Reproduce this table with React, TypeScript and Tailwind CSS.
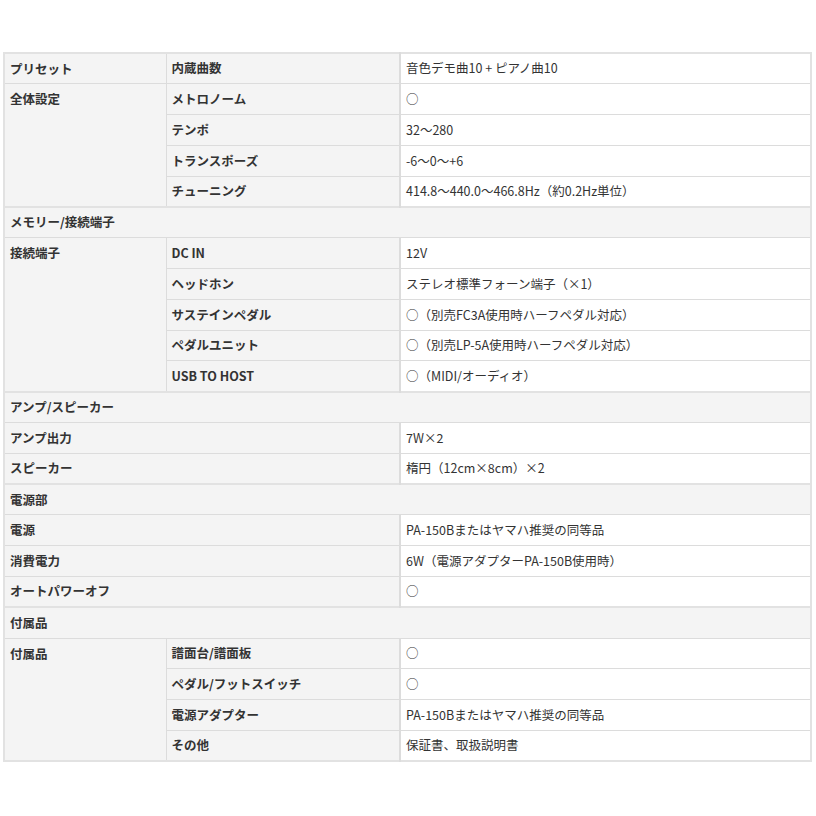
import React from 'react'

type Spec = { label: string; value: string }
type Group = { name: string; items: Spec[]; sub?: boolean }
type Section = { title?: string; groups: Group[] }

const sections: Section[] = [
  {
    groups: [
      { name: 'プリセット', sub: true, items: [{ label: '内蔵曲数', value: '音色デモ曲10 + ピアノ曲10' }] },
      {
        name: '全体設定',
        sub: true,
        items: [
          { label: 'メトロノーム', value: '○' },
          { label: 'テンポ', value: '32〜280' },
          { label: 'トランスポーズ', value: '-6〜0〜+6' },
          { label: 'チューニング', value: '414.8〜440.0〜466.8Hz（約0.2Hz単位）' },
        ],
      },
    ],
  },
  {
    title: 'メモリー/接続端子',
    groups: [
      {
        name: '接続端子',
        sub: true,
        items: [
          { label: 'DC IN', value: '12V' },
          { label: 'ヘッドホン', value: 'ステレオ標準フォーン端子（×1）' },
          { label: 'サステインペダル', value: '○（別売FC3A使用時ハーフペダル対応）' },
          { label: 'ペダルユニット', value: '○（別売LP-5A使用時ハーフペダル対応）' },
          { label: 'USB TO HOST', value: '○（MIDI/オーディオ）' },
        ],
      },
    ],
  },
  {
    title: 'アンプ/スピーカー',
    groups: [
      { name: 'アンプ出力', items: [{ label: '', value: '7W×2' }] },
      { name: 'スピーカー', items: [{ label: '', value: '楕円（12cm×8cm）×2' }] },
    ],
  },
  {
    title: '電源部',
    groups: [
      { name: '電源', items: [{ label: '', value: 'PA-150Bまたはヤマハ推奨の同等品' }] },
      { name: '消費電力', items: [{ label: '', value: '6W（電源アダプターPA-150B使用時）' }] },
      { name: 'オートパワーオフ', items: [{ label: '', value: '○' }] },
    ],
  },
  {
    title: '付属品',
    groups: [
      {
        name: '付属品',
        sub: true,
        items: [
          { label: '譜面台/譜面板', value: '○' },
          { label: 'ペダル/フットスイッチ', value: '○' },
          { label: '電源アダプター', value: 'PA-150Bまたはヤマハ推奨の同等品' },
          { label: 'その他', value: '保証書、取扱説明書' },
        ],
      },
    ],
  },
]

const head = 'bg-[#f4f4f4] font-bold text-[#333] border border-[#dcdcdc] px-[5px] h-[30.8px]'
const val = 'bg-white text-[#333] border border-[#dcdcdc] border-l-2 border-l-[#dcdcdc] px-[5px] h-[30.8px]'

export default function App() {
  return (
    <div
      className="w-[816px] h-[816px] bg-white pt-[52px] pl-[3px]"
      style={{ fontFamily: '"Noto Sans CJK JP", "Liberation Sans", sans-serif' }}
    >
      <table className="w-[809px] border-collapse border-2 border-[#e2e2e2] text-[12.5px] leading-none table-fixed">
        <colgroup>
          <col className="w-[162px]" />
          <col className="w-[234px]" />
          <col />
        </colgroup>
        <tbody>
          {sections.map((s, si) => (
            <React.Fragment key={si}>
              {s.title && (
                <tr>
                  <td colSpan={3} className={`${head} border-t-2 border-t-[#e2e2e2]`}>
                    {s.title}
                  </td>
                </tr>
              )}
              {s.groups.map((g) =>
                g.items.map((it, i) => (
                  <tr key={g.name + i}>
                    {i === 0 &&
                      (g.sub ? (
                        <td rowSpan={g.items.length} className={`${head} align-top pt-[9px]`}>
                          {g.name}
                        </td>
                      ) : (
                        <td colSpan={2} className={head}>
                          {g.name}
                        </td>
                      ))}
                    {g.sub && <td className={head}>{it.label}</td>}
                    <td className={val}>{it.value}</td>
                  </tr>
                )),
              )}
            </React.Fragment>
          ))}
        </tbody>
      </table>
    </div>
  )
}
